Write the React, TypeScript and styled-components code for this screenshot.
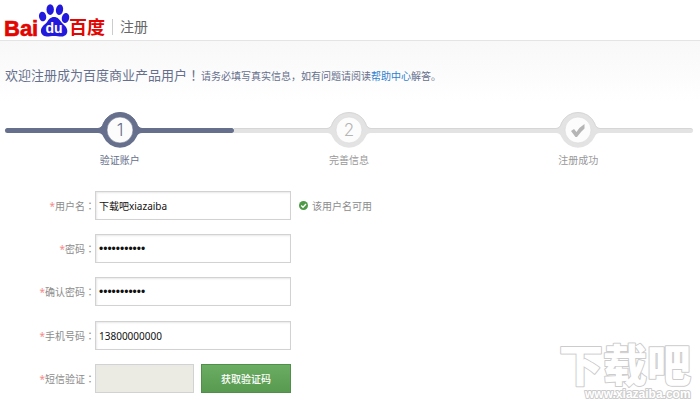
import React from 'react';
import styled, { createGlobalStyle, css } from 'styled-components';

const latin = '"Noto Sans", "Noto Sans CJK SC", sans-serif';
const centredMarks = '"Noto Sans CJK TC", sans-serif';

const GlobalStyle = createGlobalStyle`
  *, *::before, *::after { box-sizing: border-box; }
  body {
    margin: 0;
    background: #fff;
    color: #8c8c8c;
    font: 10px/16px ${latin};
  }
  svg { display: block; }
`;

const Page = styled.div`
  position: relative;
  min-height: 100vh;
  overflow: hidden;
`;

const Header = styled.header`
  display: flex;
  align-items: center;
  height: 41px;
  padding-left: 4px;
  border-bottom: 1px solid #e4e4e4;
`;

const Brand = styled.a`
  display: block;
  height: 40px;
`;

const HeaderTitle = styled.h1`
  margin: 14px 0 0 6px;
  padding-left: 7px;
  border-left: 1px solid #ccc;
  color: #666;
  font-size: 14px;
  font-weight: 400;
  line-height: 16px;
`;

const Main = styled.main`
  padding: 24px 7px 12px 5px;
  background: linear-gradient(#f8f8f8, #fff 60px);
`;

const Welcome = styled.div`
  display: flex;
  align-items: baseline;
  gap: 1px;
  color: #66708c;
`;

const WelcomeTitle = styled.h2`
  margin: 0;
  font-size: 13px;
  font-weight: 400;
  line-height: 20px;
`;

const Hint = styled.p`
  margin: 0;
`;

const Mark = styled.span`
  font-family: ${centredMarks};
`;

const HelpLink = styled.a`
  color: #2f7fce;
  text-decoration: none;
`;

const Steps = styled.ol`
  display: flex;
  margin: 27px 0 0;
  padding: 0;
  list-style: none;
`;

const Step = styled.li<{ $active?: boolean }>`
  flex: 1;
  color: ${p => (p.$active ? '#66708c' : '#999')};
  text-align: center;
`;

const Track = styled.div`
  display: flex;
  align-items: center;
`;

const Line = styled.span<{ $active?: boolean; $start?: boolean; $end?: boolean }>`
  flex: 1;
  height: 5px;
  background: #e3e3e3;
  border-top: 1px solid #d6d6d6;
  ${p => p.$active && css`
    background: #66708c;
    border-color: #66708c;
  `}
  ${p => p.$start && css`border-radius: 3px 0 0 3px;`}
  ${p => p.$end && css`border-radius: 0 3px 3px 0;`}
`;

const StepName = styled.div`
  margin-top: 4px;
`;

const Form = styled.form`
  display: grid;
  gap: 15px;
  margin-top: 23px;
`;

const Group = styled.div`
  display: grid;
  gap: 14px;
`;

const Row = styled.div`
  display: flex;
  align-items: center;
`;

const Label = styled.label`
  width: 90px;
  text-align: right;
`;

const Required = styled.span`
  color: #f58a8a;
`;

const Field = styled.input<{ $short?: boolean }>`
  width: ${p => (p.$short ? 99 : 196)}px;
  height: 29px;
  padding: 0 3px;
  border: 1px solid #d2d2d2;
  border-radius: 0;
  background: #fff;
  box-shadow: inset 1px 1px 2px #e8e8e8;
  color: #111;
  font: 10px/16px ${latin};
  outline: none;
  &:disabled { background: #ebebe4; }
  &[type='password'] { font: 12px/16px "Liberation Sans", sans-serif; }
`;

const Status = styled.output`
  display: flex;
  align-items: center;
  gap: 4px;
  margin-left: 8px;
`;

const CodeButton = styled.button`
  width: 90px;
  height: 29px;
  margin-left: 7px;
  padding: 0;
  border: 1px solid #4f8f49;
  background: linear-gradient(#6bad62, #579a50);
  color: #fff;
  font: 500 10px/16px ${latin};
`;

const Watermark = styled.div`
  position: absolute;
  right: 6px;
  bottom: 2px;
  pointer-events: none;
`;

function BaiduLogo() {
  return (
    <svg width="102" height="40" viewBox="0 0 102 40" role="img" aria-label="Baidu百度">
      <text x="0" y="36" fill="#e10601" stroke="#e10601" strokeWidth="0.6" fontFamily="Liberation Sans" fontWeight="700" fontSize="22">Bai</text>
      <g fill="#2319dc">
        <ellipse cx="38.6" cy="16.5" rx="3.6" ry="4.9" transform="rotate(-12 38.6 16.5)" />
        <ellipse cx="46.2" cy="9.6" rx="3.7" ry="5.3" />
        <ellipse cx="55.5" cy="9.8" rx="3.6" ry="5.3" transform="rotate(10 55.5 9.8)" />
        <ellipse cx="61.5" cy="18" rx="3.7" ry="5" transform="rotate(12 61.5 18)" />
        <path d="M50 17c3.600 0 5.300 2.300 7 4.800 2 2.700 6.300 4.700 6.300 9.200 0 3.400-2.600 5.800-6.100 5.500-2.500-.2-4.400-.6-7.200-.6s-4.700.6-7.200.6c-3.600 0-5.900-2.500-5.900-5.700 0-4.300 4.100-6.200 6.200-8.900 1.700-2.500 3.300-4.900 6.900-4.900z" />
      </g>
      <text x="50" y="33" textAnchor="middle" fill="#fff" fontFamily="Liberation Sans" fontWeight="700" fontSize="14">du</text>
      <text x="65" y="34" fill="#e10601" fontFamily="Noto Sans CJK SC" fontWeight="700" fontSize="18">百度</text>
    </svg>
  );
}

type NodeProps = { active?: boolean; digit?: string };

function StepNode({ active, digit }: NodeProps) {
  const ring = active ? '#66708c' : '#e3e3e3';
  const edge = active ? '#66708c' : '#d6d6d6';
  return (
    <svg width="48" height="36" viewBox="0 0 48 36" aria-hidden="true">
      <path
        d="M0 16h2q4 0 5.500-5a18 18 0 0 1 33 0q1.500 5 5.500 5h2v5h-2q-4 0-5.500 4a18 18 0 0 1-33 0q-1.500-4-5.500-4h-2z"
        fill={ring}
      />
      <path d="M0 16.500h2q4 0 5.500-5.500a18 17.500 0 0 1 33 0q1.500 5.500 5.500 5.500h2" fill="none" stroke={edge} />
      <circle cx="24" cy="18" r="13" fill="#fcfcfc" stroke={edge} strokeWidth="0.6" />
      {digit ? (
        <text x="24" y="24" textAnchor="middle" fontFamily="Inter" fontWeight="300" fontSize="17" fill={active ? '#66708c' : '#b5b5b5'}>{digit}</text>
      ) : (
        <path d="M17 19l3-2 2.500 3q3-5 8-8v4.500q-4 3.500-7.500 8.500h-1.500z" fill="#b5b5b5" />
      )}
    </svg>
  );
}

function OkIcon() {
  return (
    <svg width="9" height="9" viewBox="0 0 9 9" aria-hidden="true">
      <circle cx="4.500" cy="4.500" r="4.500" fill="#4f9a45" />
      <path d="M2.200 4.500l1.800 1.800 3-3.300" fill="none" stroke="#fff" strokeWidth="1.300" />
    </svg>
  );
}

type FormRowProps = {
  id: string;
  label: string;
  type?: string;
  value?: string;
  short?: boolean;
  disabled?: boolean;
  children?: React.ReactNode;
};

function FormRow({ id, label, type = 'text', value, short, disabled, children }: FormRowProps) {
  return (
    <Row>
      <Label htmlFor={id}><Required>*</Required>{label}<Mark lang="zh-TW">：</Mark></Label>
      <Field id={id} type={type} defaultValue={value} $short={short} disabled={disabled} />
      {children}
    </Row>
  );
}

export default function App() {
  return (
    <>
      <GlobalStyle />
      <Page lang="zh-CN">
        <Header>
          <Brand href="#home"><BaiduLogo /></Brand>
          <HeaderTitle>注册</HeaderTitle>
        </Header>
        <Main>
          <Welcome>
            <WelcomeTitle>欢迎注册成为百度商业产品用户<Mark lang="zh-TW">！</Mark></WelcomeTitle>
            <Hint>
              请务必填写真实信息，如有问题请阅读<HelpLink href="#help">帮助中心</HelpLink>解答。
            </Hint>
          </Welcome>
          <Steps>
            <Step $active aria-current="step">
              <Track><Line $active $start /><StepNode active digit="1" /><Line $active $end /></Track>
              <StepName>验证账户</StepName>
            </Step>
            <Step>
              <Track><Line /><StepNode digit="2" /><Line /></Track>
              <StepName>完善信息</StepName>
            </Step>
            <Step>
              <Track><Line /><StepNode /><Line $end /></Track>
              <StepName>注册成功</StepName>
            </Step>
          </Steps>
          <Form>
            <Group>
              <FormRow id="username" label="用户名" value="下载吧xiazaiba">
                <Status htmlFor="username"><OkIcon />该用户名可用</Status>
              </FormRow>
              <FormRow id="password" label="密码" type="password" value="xiazaiba123" />
              <FormRow id="confirm" label="确认密码" type="password" value="xiazaiba123" />
            </Group>
            <Group>
              <FormRow id="phone" label="手机号码" type="tel" value="13800000000" />
              <FormRow id="code" label="短信验证" short disabled>
                <CodeButton type="button">获取验证码</CodeButton>
              </FormRow>
            </Group>
          </Form>
        </Main>
        <Watermark>
          <svg width="136" height="80" viewBox="0 0 136 80" role="img" aria-label="下载吧 www.xiazaiba.com">
            <g fill="#fff" stroke="#ccc" paintOrder="stroke" strokeLinejoin="round">
              <text x="1" y="59" fontFamily="Noto Sans CJK SC" fontWeight="900" fontSize="44" strokeWidth="2">下载吧</text>
              <text x="27" y="75" fontFamily="Liberation Sans" fontWeight="700" fontSize="12" strokeWidth="2">www.xiazaiba.com</text>
            </g>
          </svg>
        </Watermark>
      </Page>
    </>
  );
}
